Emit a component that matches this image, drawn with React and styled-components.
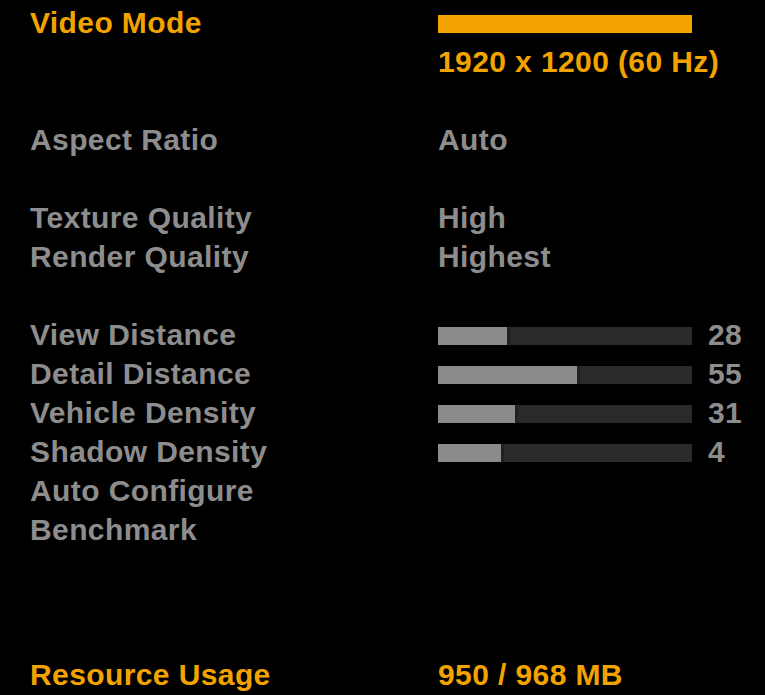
import styled, { createGlobalStyle } from 'styled-components';

const GlobalStyle = createGlobalStyle`
    html, body {
        margin: 0;
        padding: 0;
        background: #000;
    }
`;

const ORANGE = '#f2a300';
const GREY = '#8d8d8d';

const Page = styled.div`
    display: flex;
    flex-direction: column;
    height: 695px;
    box-sizing: border-box;
    padding: 3px 0 1px 30px;
    background: #000;
    font-family: "Liberation Sans", Arial, sans-serif;
    font-weight: bold;
    font-size: 30px;
    letter-spacing: 0.4px;
    line-height: 39px;
    color: ${GREY};
`;

const Row = styled.div`
    display: grid;
    grid-template-columns: 408px 1fr;
    height: 39px;
    color: ${(p) => (p.$accent ? ORANGE : GREY)};
    white-space: nowrap;
`;

const Spacer = styled.div`
    height: ${(p) => (p.$lines || 1) * 39}px;
`;

const Value = styled.div`
    display: flex;
    align-items: flex-start;
`;

const Bar = styled.div`
    width: 254px;
    height: 18px;
    margin-top: 12px;
    background: ${(p) => (p.$accent ? ORANGE : '#2a2a2a')};
    overflow: hidden;
`;

const Fill = styled.div`
    height: 100%;
    background: #8b8b8b;
    box-shadow: 3px 0 0 #212121;
`;

const Amount = styled.span`
    margin-left: 16px;
`;

const Footer = styled(Row)`
    margin-top: auto;
`;

const sliders = [
    { label: 'View Distance', value: 28, ratio: 0.272 },
    { label: 'Detail Distance', value: 55, ratio: 0.547 },
    { label: 'Vehicle Density', value: 31, ratio: 0.303 },
    { label: 'Shadow Density', value: 4, ratio: 0.248 },
];

export default function App() {
    return (
        <Page>
            <GlobalStyle />
            <Row $accent>
                <span>Video Mode</span>
                <Value>
                    <Bar $accent />
                </Value>
            </Row>
            <Row $accent>
                <span />
                <span>1920 x 1200 (60 Hz)</span>
            </Row>
            <Spacer />
            <Row>
                <span>Aspect Ratio</span>
                <span>Auto</span>
            </Row>
            <Spacer />
            <Row>
                <span>Texture Quality</span>
                <span>High</span>
            </Row>
            <Row>
                <span>Render Quality</span>
                <span>Highest</span>
            </Row>
            <Spacer />
            {sliders.map((s) => (
                <Row key={s.label}>
                    <span>{s.label}</span>
                    <Value>
                        <Bar>
                            <Fill style={{ width: `${s.ratio * 100}%` }} />
                        </Bar>
                        <Amount>{s.value}</Amount>
                    </Value>
                </Row>
            ))}
            <Row>
                <span>Auto Configure</span>
            </Row>
            <Row>
                <span>Benchmark</span>
            </Row>
            <Footer $accent>
                <span>Resource Usage</span>
                <span>950 / 968 MB</span>
            </Footer>
        </Page>
    );
}
